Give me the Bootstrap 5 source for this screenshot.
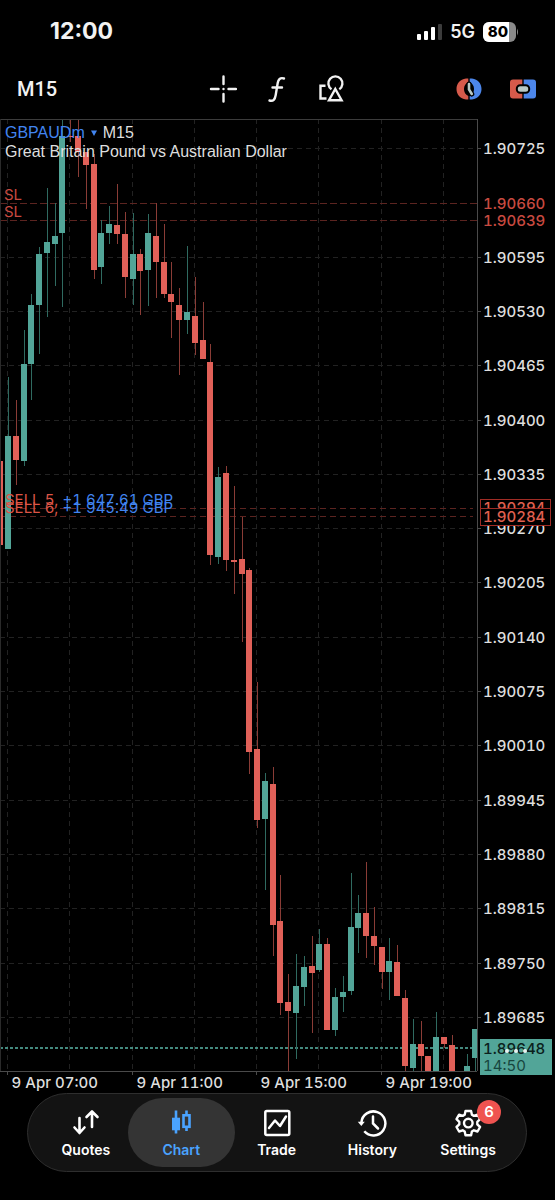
<!DOCTYPE html>
<html lang="en">
<head>
<meta charset="utf-8">
<meta name="viewport" content="width=device-width, initial-scale=1">
<title>GBPAUDm M15</title>
<link href="https://cdn.jsdelivr.net/npm/bootstrap@5.3.0/dist/css/bootstrap.min.css" rel="stylesheet">
<style>
  body { background: #000; color: #f2f2f2; font-family: Inter, sans-serif; }
  button { color: inherit; background: none; border: 0; padding: 0; }
  .status { height: 59px; padding: 4px 36px 0 50px; }
  .clock { font-size: 23px; font-weight: 700; }
  .net { font-size: 18px; font-weight: 600; }
  .tools { height: 60px; padding: 0 18px 0 17px; }
  .tools > div { flex: 1 1 0; }
  .tool-set { gap: 26px; }
  .tf { font: 500 20px Roboto, sans-serif; }
  .plot { min-height: 500px; }
  .plot svg { min-width: 0; }
  #chart { width: 100%; }
  .plot text { font-size: 15px; font-weight: 500; font-variant-numeric: tabular-nums; fill: #dedede; dominant-baseline: central; }
  .plot .order { font-weight: 400; }
  .caption { position: absolute; left: 5px; top: 4px; font: 16px/19px "Liberation Sans", sans-serif; color: #dedede; white-space: nowrap; }
  .caption button { color: #4285f0; }
  .tabs { margin: 0 28px 28px 27px; padding: 4px 10px; border: 1px solid #2e2e2e; border-radius: 40px; background: #131313; }
  .tab { flex: 1 1 0; min-width: 0; height: 69px; color: #fff; font-size: 14px; font-weight: 600; line-height: 16px; text-decoration: none; }
  .tab.active { flex: 0 0 107px; margin: 0 -6px; border-radius: 35px; background: #343434; color: #4aa3ff; }
  .count { position: absolute; left: 24px; top: -8px; width: 24px; height: 24px; border-radius: 12px; background: #ef5350; color: #fff; font-size: 15px; line-height: 24px; text-align: center; }
</style>
</head>
<body class="d-flex flex-column min-vh-100">

<header>
  <div class="status d-flex align-items-center justify-content-between">
    <span class="clock">12:00</span>
    <div class="d-flex align-items-center gap-2">
      <svg width="25" height="18" viewBox="0 0 25 18" fill="#fff"><rect x="0" y="11" width="4" height="6" rx="1"/><rect x="7" y="8" width="4" height="9" rx="1"/><rect x="14" y="4" width="4" height="13" rx="1"/><rect x="21" y="1" width="4" height="16" rx="1" fill="#3c3c3c"/></svg>
      <span class="net">5G</span>
      <svg width="36" height="20" viewBox="0 0 36 20"><rect width="33" height="20" rx="6" fill="#8a8a8a"/><path d="M6 0H26V20H6A6 6 0 0 1 0 14V6A6 6 0 0 1 6 0Z" fill="#fff"/><path d="M34 6.500q2 3.500 0 7z" fill="#8a8a8a"/><text x="15" y="15" text-anchor="middle" font-size="15" font-weight="800" fill="#000">80</text></svg>
    </div>
  </div>
  <div class="tools d-flex align-items-center">
    <div><button class="tf" type="button">M15</button></div>
    <nav class="tool-set d-flex align-items-center" aria-label="Chart tools">
      <button type="button" aria-label="Crosshair"><svg class="d-block" width="28" height="28" viewBox="0 0 28 28" stroke="#f2f2f2" stroke-width="2.400" stroke-linecap="round"><path d="M14.500 1.500V9M14.500 19v7.500M2 14H9.500M19.500 14H27M14.500 14h.01"/></svg></button>
      <button type="button" aria-label="Indicators"><svg class="d-block" width="28" height="28" viewBox="0 0 28 28" fill="none" stroke="#f2f2f2" stroke-width="2.400" stroke-linecap="round"><path d="M21 3.500C17 2.300 15.300 4.500 14.700 8L12.700 20C12 24.500 10.300 26.500 6.500 25.500M9.500 12.500H19"/></svg></button>
      <button type="button" aria-label="Objects"><svg class="d-block" width="28" height="28" viewBox="0 0 28 28" fill="none" stroke="#f2f2f2" stroke-width="2.400"><path d="M8.500 10.700H3.500V23.500H9.500M14.500 14.200A7 7 0 1 1 22.300 14.200M18.300 14L24.600 25.200H12Z"/></svg></button>
    </nav>
    <div class="tool-set d-flex align-items-center justify-content-end">
      <button type="button" aria-label="Trading hours"><svg class="d-block" width="28" height="24" viewBox="0 0 28 24" fill="none"><path d="M13.300 1.500H11C5 2.300 1.500 6.500 1.500 12s3.500 9.700 9.500 10.500h2.300v-3.400A8 8 0 0 1 13.300 4.900Z" fill="#d65a4b"/><path d="M14.700 1.500H17C23 2.300 26.500 6.500 26.500 12s-3.500 9.700-9.500 10.500h-2.300v-3.400A8 8 0 0 0 14.700 4.900Z" fill="#4c86ea"/><path d="M14 7v5.500l2.800 4.500" stroke="#000" stroke-width="5" stroke-linecap="round"/><path d="M14 7v5.500l2.800 4.500" stroke="#b9c9c6" stroke-width="2.600" stroke-linecap="round"/></svg></button>
      <button type="button" aria-label="One click trading"><svg class="d-block" width="28" height="22" viewBox="0 0 28 22"><path d="M4 1.500h9.300v19H4a3 3 0 0 1-3-3v-13a3 3 0 0 1 3-3Z" fill="#d65a4b"/><path d="M14.700 1.500H24a3 3 0 0 1 3 3v13a3 3 0 0 1-3 3h-9.300Z" fill="#4c86ea"/><rect x="7.800" y="7.200" width="12.400" height="7.600" rx="3.500" fill="#b9c9c6" stroke="#000" stroke-width="2"/></svg></button>
    </div>
  </div>
</header>

<main class="plot position-relative flex-grow-1 d-flex">
  <svg id="chart" class="d-block" role="img" aria-label="GBPAUDm price chart"></svg>
  <div class="caption">
    <div class="d-flex gap-1"><button class="d-flex align-items-center gap-1" type="button">GBPAUDm <svg width="10" height="8" viewBox="0 0 10 8" fill="#4285f0"><path d="M2 1.500H8L5 7Z"/></svg></button><span>M15</span></div>
    <div>Great Britain Pound vs Australian Dollar</div>
  </div>
</main>

<nav class="tabs d-flex" aria-label="Main">
  <a class="tab d-flex flex-column align-items-center justify-content-center gap-1" href="#quotes">
    <svg width="30" height="30" viewBox="0 0 30 30" fill="none" stroke="#fff" stroke-width="2.600" stroke-linecap="round" stroke-linejoin="round"><path d="M8.500 10v14.500M3.500 19.500l5 5.500 5-5.500M21 19V4M15.500 9L21 3.500 26.500 9"/></svg>
    <span>Quotes</span></a>
  <a class="tab active d-flex flex-column align-items-center justify-content-center gap-1" href="#chart" aria-current="page">
    <svg width="30" height="30" viewBox="0 0 30 30" fill="none" stroke="#4aa3ff" stroke-width="2.600"><path d="M10 2.500v23M20.500 2.500V7M20.500 19v4"/><rect x="7.300" y="11" width="5.400" height="10" fill="#4aa3ff"/><rect x="17.500" y="7.300" width="6" height="11.500"/></svg>
    <span>Chart</span></a>
  <a class="tab d-flex flex-column align-items-center justify-content-center gap-1" href="#trade">
    <svg width="30" height="30" viewBox="0 0 30 30" fill="none" stroke="#fff" stroke-width="2.500" stroke-linejoin="round"><rect x="3.300" y="3" width="24" height="24" rx="1.500"/><path d="M7 20l6-7.500 5 5.500 6-9.500" stroke-linecap="round"/></svg>
    <span>Trade</span></a>
  <a class="tab d-flex flex-column align-items-center justify-content-center gap-1" href="#history">
    <svg width="30" height="30" viewBox="0 0 30 30" fill="none" stroke="#fff" stroke-width="2.500"><path d="M4.400 14.500A12 12 0 1 1 7.300 23.300"/><path d="M.8 13.800h7L4.300 18Z" fill="#fff" stroke="none"/><path d="M16 8.500v7l5 5" stroke-linecap="round"/></svg>
    <span>History</span></a>
  <a class="tab d-flex flex-column align-items-center justify-content-center gap-1" href="#settings">
    <span class="position-relative d-block"><svg class="d-block" width="30" height="30" viewBox="0 0 30 30" fill="none" stroke="#fff" stroke-width="2.400" stroke-linejoin="round"><path d="M12.500 3h5.600l.8 3.700 2 1.200 3.600-1.200 2.600 4.500-2.800 2.600v2.600l2.800 2.600-2.600 4.500-3.600-1.200-2 1.200-.8 3.700h-5.600l-.8-3.700-2-1.200-3.600 1.200-2.600-4.500 2.800-2.600v-2.600l-2.800-2.600 2.600-4.500 3.600 1.200 2-1.200Z"/><circle cx="15.300" cy="15.100" r="4.300"/></svg><span class="count">6</span></span>
    <span>Settings</span></a>
</nav>

<script src="https://cdn.jsdelivr.net/npm/bootstrap@5.3.0/dist/js/bootstrap.bundle.min.js"></script>
<script>
// Each candle: direction (u/d), high, body top, body bottom, low, in units of the vertical scale.
const TOP = 119, BOTTOM = 1071, STEP = 7.785;
const candles = `d 461 461 545 545|u 377 436 549 549|d 400 436 460 485|u 330 364 461 466|u 294 305 364 400|u 247 254 305 354|u 188 242 253 317|u 203 236 244 286|u 120 136 233 307|d 120 136 137 142|d 120 136 152 177|d 152 152 165 209|d 154 164 270 279|u 220 233 267 284|u 206 224 233 244|d 184 225 234 244|d 212 234 277 298|u 213 254 279 305|d 249 254 271 315|u 214 233 270 306|d 203 236 262 298|d 224 262 294 298|d 262 294 302 338|d 288 305 320 375|u 246 312 320 334|d 277 316 343 355|d 302 340 359 359|d 344 362 555 565|u 467 477 557 564|d 466 473 560 571|d 486 560 562 594|d 517 559 574 642|d 568 570 752 774|d 682 749 820 828|u 773 781 819 890|d 767 784 925 956|d 875 921 1003 1015|d 974 1002 1011 1071|u 954 986 1013 1059|u 956 967 987 1006|d 936 966 973 1033|u 929 944 970 972|d 938 944 1030 1030|u 988 997 1030 1036|u 976 992 997 1012|u 873 927 991 995|u 895 913 928 953|d 862 913 936 958|d 907 936 946 965|d 947 947 972 989|u 938 961 972 1000|d 945 962 996 996|d 990 998 1066 1071|u 1019 1044 1068 1071|d 1021 1044 1056 1071|d 1056 1056 1071 1071|u 1012 1037 1071 1071|d 1037 1037 1044 1048|d 1035 1045 1071 1071||u 1054 1066 1071 1071|u 1029 1029 1058 1071`.split('|').map(s => s.split(' '));

const svg = document.getElementById('chart');
function draw() {
  const W = svg.clientWidth, H = svg.clientHeight - 22, R = W - 78;
  const y = v => Math.round((v - TOP) * H / (BOTTOM - TOP));
  const sx = R / 477;
  let o = '';
  const line = (x1, y1, x2, y2, c, dash) => {
    o += `<line x1="${x1}" y1="${y1}" x2="${x2}" y2="${y2}" stroke="${c}"${dash ? ` stroke-dasharray="${dash}"` : ''} shape-rendering="crispEdges"/>`;
  };
  const text = (x, ty, s, fill, cls) => {
    o += `<text x="${x}" y="${ty}"${fill ? ` style="fill:${fill}"` : ''}${cls ? ` class="${cls}"` : ''}>${s}</text>`;
  };
  for (let i = 0; i < 8; i++) {
    const x = Math.round((7 + i * 8 * STEP) * sx) + .5;
    line(x, 0, x, H, '#222222', '5 4');
    if (i % 2 === 0) {
      line(x, H, x, H + 4, '#4a4a4a');
      text(x + 4, H + 11, '9 Apr ' + ['07', '11', '15', '19'][i / 2] + ':00');
    }
  }
  for (let i = 0; i < 17; i++) {
    const gy = y(148 + i * 54.3) + .5;
    if (i !== 1) {
      line(0, gy, R, gy, '#222222', '5 4');
      line(R, gy, R + 4, gy, '#4a4a4a');
      text(R + 6, gy, (1.90725 - i * .00065).toFixed(5));
    }
  }
  for (const [v, p] of [[203, '1.90660'], [220, '1.90639']]) {
    line(0, y(v) + .5, R + 3, y(v) + .5, '#5c2420', '7 3');
    text(4, y(v) - 9, 'SL', '#c94a40', 'order');
    text(R + 6, y(v), p, '#c94a40');
  }
  for (const v of [508, 516]) line(0, y(v) + .5, R - 4, y(v) + .5, '#5c2420', '6 4');
  const by = y(1048);
  o += `<line x1="0" y1="${by}" x2="${R}" y2="${by}" stroke="#4fa294" stroke-width="2" stroke-dasharray="3 2" opacity=".85"/>`;
  o += `<clipPath id="area"><rect width="${R}" height="${H}"/></clipPath><g clip-path="url(#area)" shape-rendering="crispEdges">`;
  candles.forEach(([d, hi, a, b, lo], i) => {
    if (!d) return;
    const x = Math.round((8 + (i - 1) * STEP) * sx), up = d === 'u';
    o += `<rect x="${x}" y="${y(+hi)}" width="1" height="${y(+lo) - y(+hi)}" fill="${up ? '#2f6a60' : '#8a3c36'}"/>`;
    o += `<rect x="${x - 3}" y="${y(+a)}" width="6" height="${Math.max(1, y(+b) - y(+a))}" fill="${up ? '#52a598' : '#e06058'}"/>`;
  });
  o += '</g>';
  line(0, .5, R, .5, '#3c3c3c'); line(.5, 0, .5, H, '#2a2a2a');
  line(R + .5, 0, R + .5, H, '#4a4a4a'); line(0, H + .5, R, H + .5, '#4a4a4a');
  for (const [v, lot, p] of [[499, 5, '647.61'], [507, 6, '945.49']]) {
    text(5, y(v), `SELL ${lot}, <tspan fill="#4285f0">+1 ${p} GBP</tspan>`, '#dd5547', 'order');
  }
  for (const [v, p] of [[508, '1.90294'], [517, '1.90284']]) {
    o += `<rect x="${R + 3.5}" y="${y(v) - 8.5}" width="70" height="17" fill="#000" stroke="#a02c25"/>`;
    text(R + 6, y(v) - 1, p, '#e06050');
  }
  o += `<rect x="${R + 3}" y="${y(1039)}" width="72" height="36" fill="#52a598"/>`;
  text(R + 6, y(1048), '1.89648', '#0b1f1c');
  text(R + 6, y(1065), '14:50', '#17453e', 'order');
  for (const x of [30, 39, 48]) o += `<circle cx="${R + x}" cy="${y(1051)}" r="2" fill="#e8f2f0"/>`;
  svg.innerHTML = o;
}
draw();
addEventListener('resize', draw);
</script>
</body>
</html>
